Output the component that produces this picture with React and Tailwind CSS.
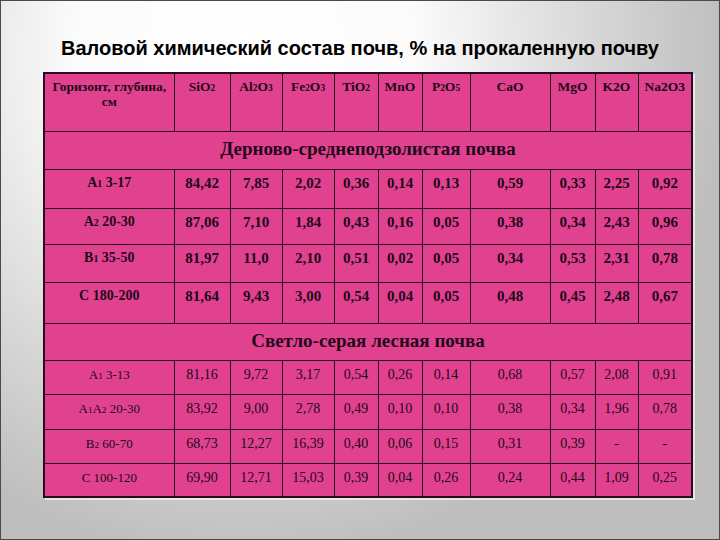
import React from "react";

const serif = { fontFamily: '"Liberation Serif", "Times New Roman", serif' };

const cols = [130, 56, 52, 52, 44, 44, 48, 80, 45, 43, 54];

function Sub({ children }) {
  return <span className="text-[0.7em]">{children}</span>;
}

const header = [
  <>Горизонт, глубина,<br />см</>,
  <>SiO<Sub>2</Sub></>,
  <>Al<Sub>2</Sub>O<Sub>3</Sub></>,
  <>Fe<Sub>2</Sub>O<Sub>3</Sub></>,
  <>TiO<Sub>2</Sub></>,
  <>MnO</>,
  <>P<Sub>2</Sub>O<Sub>5</Sub></>,
  <>CaO</>,
  <>MgO</>,
  <>K2O</>,
  <>Na2O3</>,
];

const sec1 = [
  { h: 39, label: <>A<Sub>1</Sub> 3-17</>, v: ["84,42", "7,85", "2,02", "0,36", "0,14", "0,13", "0,59", "0,33", "2,25", "0,92"] },
  { h: 36, label: <>A<Sub>2</Sub> 20-30</>, v: ["87,06", "7,10", "1,84", "0,43", "0,16", "0,05", "0,38", "0,34", "2,43", "0,96"] },
  { h: 38, label: <>B<Sub>1</Sub> 35-50</>, v: ["81,97", "11,0", "2,10", "0,51", "0,02", "0,05", "0,34", "0,53", "2,31", "0,78"] },
  { h: 41, label: <>C 180-200</>, v: ["81,64", "9,43", "3,00", "0,54", "0,04", "0,05", "0,48", "0,45", "2,48", "0,67"] },
];

const sec2 = [
  { h: 34, label: <>A<Sub>1</Sub> 3-13</>, v: ["81,16", "9,72", "3,17", "0,54", "0,26", "0,14", "0,68", "0,57", "2,08", "0,91"] },
  { h: 35, label: <>A<Sub>1</Sub>A<Sub>2</Sub> 20-30</>, v: ["83,92", "9,00", "2,78", "0,49", "0,10", "0,10", "0,38", "0,34", "1,96", "0,78"] },
  { h: 34, label: <>B<Sub>2</Sub> 60-70</>, v: ["68,73", "12,27", "16,39", "0,40", "0,06", "0,15", "0,31", "0,39", "-", "-"] },
  { h: 34, label: <>C 100-120</>, v: ["69,90", "12,71", "15,03", "0,39", "0,04", "0,26", "0,24", "0,44", "1,09", "0,25"] },
];

const cell = "border border-[#2a0a1c] text-center align-top p-0";

export default function App() {
  return (
    <div className="w-[720px] h-[540px] overflow-hidden border border-[#4a4a4a] bg-[radial-gradient(ellipse_68%_95%_at_34%_10%,#ffffff_0%,#fbfbfb_35%,#e0e0e0_62%,#bdbdbd_100%)]">
      <div
        className="pt-[35px] h-[71px] text-center text-[20px] leading-[24px] font-bold text-black"
        style={{ fontFamily: '"Liberation Sans", Arial, sans-serif' }}
      >
        Валовой химический состав почв, % на прокаленную почву
      </div>
      <div className="pl-[42px]">
        <table
          className="border-collapse border-2 border-[#2a0a1c] bg-[#e1428f] text-[#22081a] shadow-[2px_2px_0_rgba(255,255,255,0.6)] table-fixed w-[649px]"
          style={serif}
        >
          <colgroup>
            {cols.map((w, i) => (
              <col key={i} style={{ width: w }} />
            ))}
          </colgroup>
          <tbody>
            <tr className="h-[58px]">
              {header.map((h, i) => (
                <td key={i} className={`${cell} pt-[5px] text-[13.5px] leading-[15px] font-bold`}>
                  {h}
                </td>
              ))}
            </tr>
            <tr className="h-[38px]">
              <td colSpan={11} className={`${cell} pt-[6px] text-[19px] leading-[22px] font-bold`}>
                Дерново-среднеподзолистая почва
              </td>
            </tr>
            {sec1.map((r, i) => (
              <tr key={i} style={{ height: r.h }}>
                <td className={`${cell} pt-[4px] text-[14px] leading-[18px] font-bold`}>{r.label}</td>
                {r.v.map((v, j) => (
                  <td key={j} className={`${cell} pt-[4px] text-[15px] leading-[18px] font-bold`}>
                    {v}
                  </td>
                ))}
              </tr>
            ))}
            <tr className="h-[37px]">
              <td colSpan={11} className={`${cell} pt-[6px] text-[19px] leading-[22px] font-bold`}>
                Светло-серая лесная почва
              </td>
            </tr>
            {sec2.map((r, i) => (
              <tr key={i} style={{ height: r.h }}>
                <td className={`${cell} pt-[5px] text-[13px] leading-[18px]`}>{r.label}</td>
                {r.v.map((v, j) => (
                  <td key={j} className={`${cell} pt-[5px] text-[14px] leading-[18px]`}>
                    {v}
                  </td>
                ))}
              </tr>
            ))}
          </tbody>
        </table>
      </div>
    </div>
  );
}
